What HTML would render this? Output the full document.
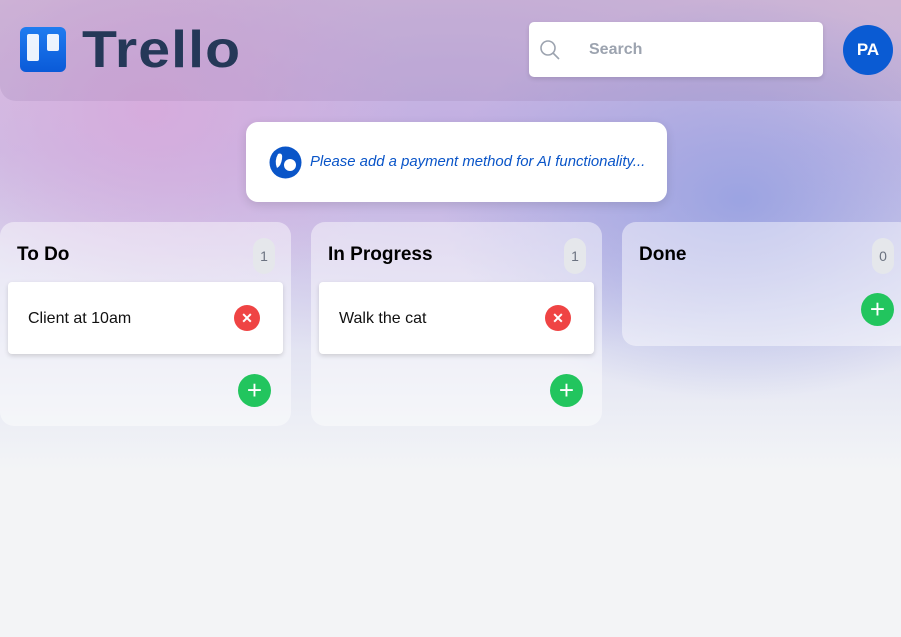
<!DOCTYPE html>
<html><head><meta charset="utf-8"><style>
*{box-sizing:border-box;margin:0;padding:0}
body{width:901px;height:637px;overflow:hidden;font-family:"Liberation Sans",Arial,sans-serif;position:relative;background:#f3f4f6}
.bg{position:absolute;inset:0;background:
radial-gradient(ellipse 260px 200px at 150px 110px,rgba(215,170,220,.9),transparent),
radial-gradient(ellipse 300px 200px at 740px 200px,rgba(150,160,225,.9),transparent),
radial-gradient(ellipse 500px 230px at 450px 130px,rgba(190,170,225,.8),transparent),
linear-gradient(180deg,#dcc6e2 0px,#cfc2e6 150px,#dcdcf0 300px,#eceef5 420px,#f3f4f6 470px)}
.hdr{position:absolute;left:0;top:0;width:901px;height:101px;background:rgba(150,120,170,.2);border-bottom-left-radius:16px}
.logo{position:absolute;left:20px;top:27px;width:46px;height:45px;border-radius:6px;background:linear-gradient(#1f7cf0,#0a5ad8)}
.logo i{position:absolute;background:#fff;border-radius:2px;opacity:.92}
.ttl{position:absolute;left:82px;top:20px;font-size:52px;font-weight:bold;color:#253858;letter-spacing:1px;transform:scaleX(1.1);transform-origin:0 0}
.search{position:absolute;left:529px;top:22px;width:294px;height:55px;background:#fff;border-radius:5px;box-shadow:0 2px 5px rgba(0,0,0,.12)}
.search span{position:absolute;left:60px;top:19px;font-size:16px;color:#9ca3af;font-weight:bold}
.av{position:absolute;left:843px;top:25px;width:50px;height:50px;border-radius:50%;background:#0a5bd3;color:#fff;font-weight:bold;font-size:17px;text-align:center;line-height:50px}
.note{position:absolute;left:246px;top:122px;width:421px;height:80px;background:#fff;border-radius:12px;box-shadow:0 3px 10px rgba(0,0,0,.12)}
.note span{position:absolute;left:64px;top:32px;font-size:14.9px;font-style:italic;color:#0a55c8}
.col{position:absolute;top:222px;width:291px;border-radius:14px;background:rgba(255,255,255,.45)}
.col h3{position:absolute;left:17px;top:22px;font-size:19px;color:#000}
.cnt{position:absolute;right:16px;top:16px;width:22px;height:36px;border-radius:11px;background:#e5e7eb;color:#6b7280;font-size:14px;text-align:center;line-height:36px}
.card{position:absolute;left:8px;top:60px;width:275px;height:72px;background:#fff;border-radius:4px;box-shadow:0 2px 5px rgba(0,0,0,.15)}
.card span{position:absolute;left:20px;top:28px;font-size:16px;color:#111}
.x{position:absolute;left:226px;top:23px;width:26px;height:26px;border-radius:50%;background:#ef4444;color:#fff;font-size:14px;font-weight:bold;text-align:center;line-height:26px}
.add{position:absolute;width:33px;height:33px;border-radius:50%;background:#22c55e;color:#fff;font-size:26px;text-align:center;line-height:32px}
</style></head><body>
<div class="bg"></div>
<div class="hdr"></div>
<div class="logo"><i style="left:7px;top:7px;width:12px;height:27px"></i><i style="left:27px;top:7px;width:12px;height:17px"></i></div>
<div class="ttl">Trello</div>
<div class="search"><svg style="position:absolute;left:10px;top:17px" width="22" height="22" viewBox="0 0 22 22" fill="none" stroke="#9ca3af" stroke-width="1.6"><circle cx="9" cy="9" r="7"/><path d="M14 14l6 6"/></svg><span>Search</span></div>
<div class="av">PA</div>
<div class="note"><svg style="position:absolute;left:23px;top:24px" width="33" height="33" viewBox="0 0 33 33"><circle cx="16.5" cy="16.5" r="16" fill="#0a55c8"/><path d="M9 8 Q14 6 13 13 Q12 20 8 22 Q5 15 9 8Z" fill="#fff"/><circle cx="21" cy="19" r="6" fill="#fff"/></svg><span>Please add a payment method for AI functionality...</span></div>
<div class="col" style="left:0;height:204px"><h3>To Do</h3><div class="cnt">1</div><div class="card"><span>Client at 10am</span><div class="x">✕</div></div><div class="add" style="left:238px;top:152px">+</div></div>
<div class="col" style="left:311px;height:204px"><h3>In Progress</h3><div class="cnt">1</div><div class="card"><span>Walk the cat</span><div class="x">✕</div></div><div class="add" style="left:239px;top:152px">+</div></div>
<div class="col" style="left:622px;height:124px"><h3>Done</h3><div class="cnt" style="right:-10px;left:250px">0</div><div class="add" style="left:239px;top:71px">+</div></div>
</body></html>
